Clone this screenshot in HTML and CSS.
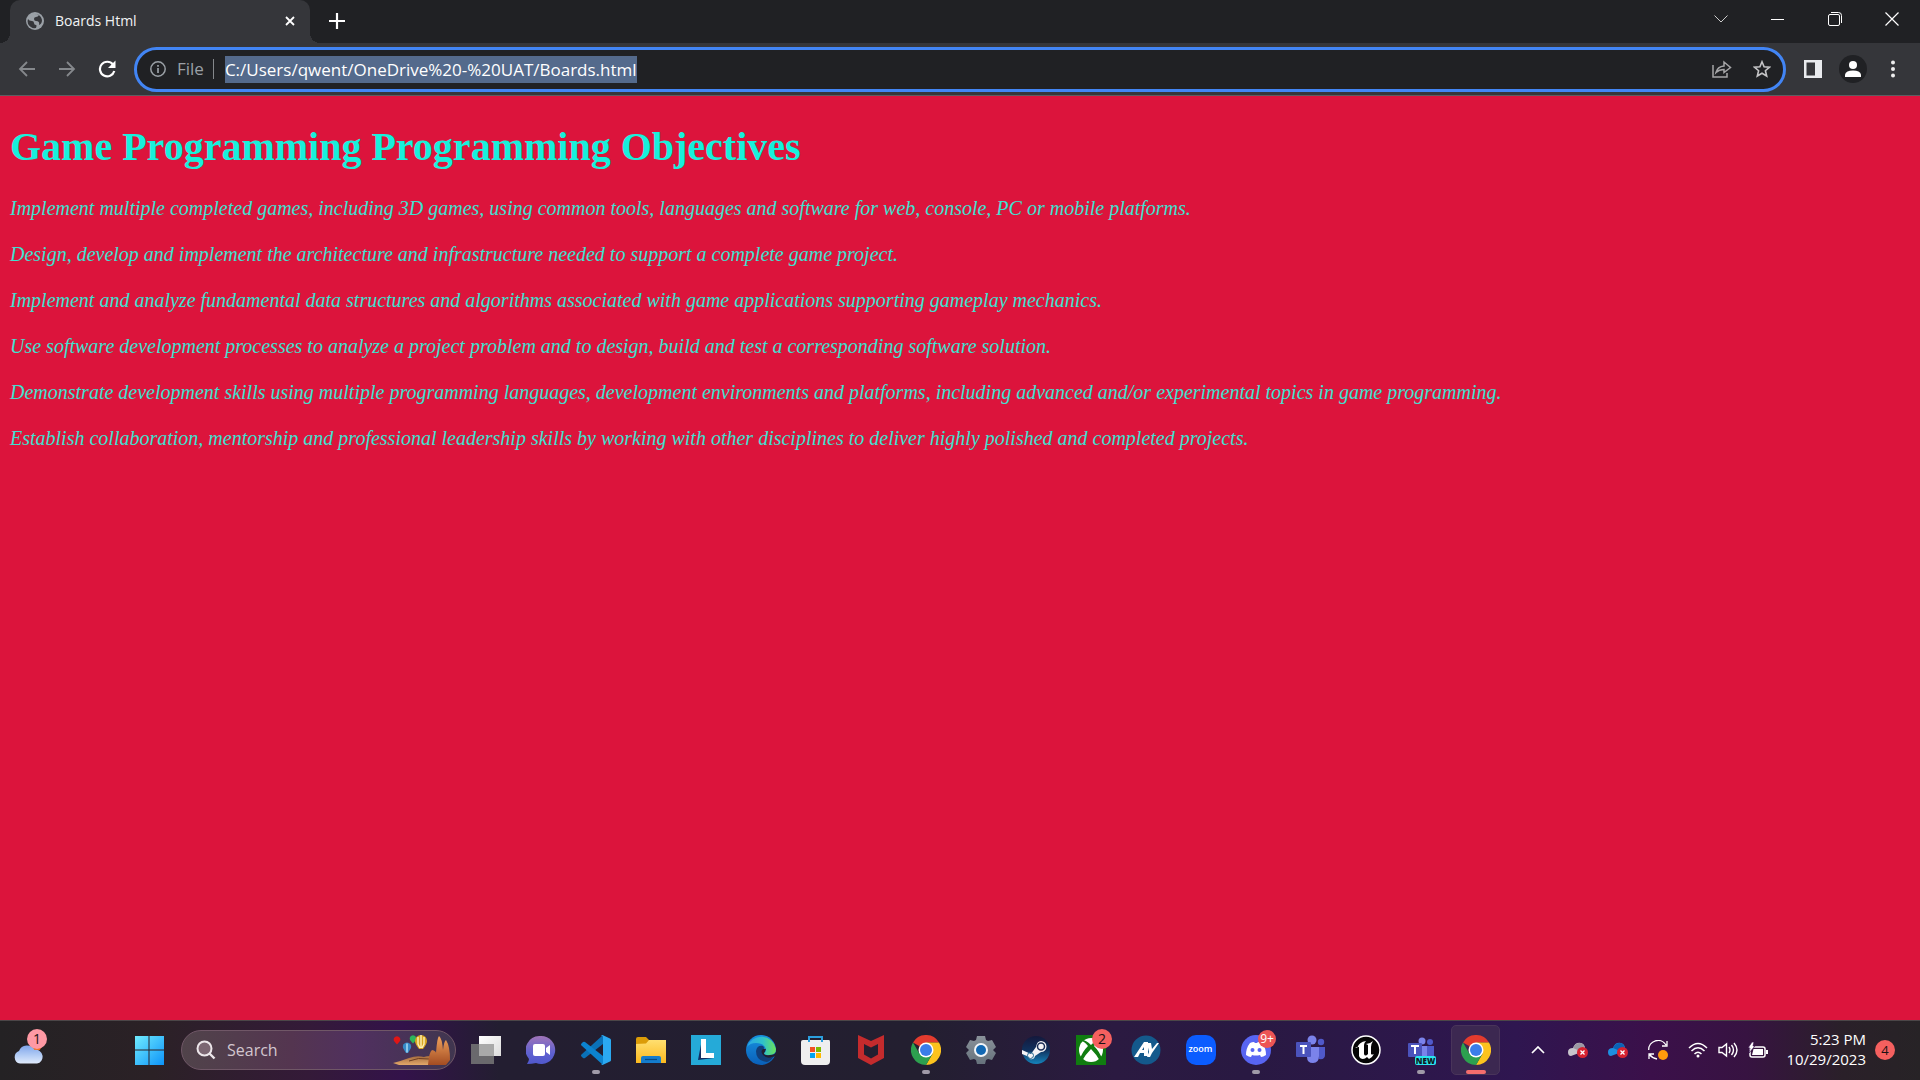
FILE: index.html
```html
<!DOCTYPE html>
<html lang="en">
<head>
<meta charset="utf-8">
<title>Boards Html</title>
<link rel="stylesheet" href="styles.css">
</head>
<body>
<svg class="defs" aria-hidden="true">
  <defs>
    <symbol id="chrome" viewBox="0 0 30 30">
      <path d="M15 15L2 7.500A15 15 0 0 1 28 7.500H15z" fill="#e33b2e"/>
      <path d="M15 7.500H28A15 15 0 0 1 15 30L21.500 18.750z" fill="#fcc31e"/>
      <path d="M8.500 18.750L2 7.500A15 15 0 0 0 15 30L21.500 18.750z" fill="#2da04f"/>
      <circle cx="15" cy="15" r="7.500" fill="#fff"/>
      <circle cx="15" cy="15" r="6" fill="#3b7de9"/>
    </symbol>
    <symbol id="alert" viewBox="0 0 11 11">
      <circle cx="5.500" cy="5.500" r="5.500" fill="#d62231"/>
      <path d="M3.500 3.500l4 4M7.500 3.500l-4 4" stroke="#fff" stroke-width="1.300"/>
    </symbol>
    <linearGradient id="winG" gradientUnits="userSpaceOnUse" x1="0" y1="0" x2="30" y2="30"><stop offset="0" stop-color="#74efff"/><stop offset="1" stop-color="#0d93f8"/></linearGradient>
    <linearGradient id="cloudG" x2="0" y2="1"><stop offset="0" stop-color="#7fa5ea"/><stop offset=".6" stop-color="#b8d0f6"/><stop offset="1" stop-color="#e0eafb"/></linearGradient>
    <linearGradient id="folderG" x2="0" y2="1"><stop offset="0" stop-color="#ffdf70"/><stop offset="1" stop-color="#fcb91e"/></linearGradient>
    <linearGradient id="edgeG" x2="1" y2="0"><stop offset="0" stop-color="#2aa5e8"/><stop offset=".55" stop-color="#30c2c8"/><stop offset="1" stop-color="#6be35a"/></linearGradient>
    <linearGradient id="edgeB" x2="0" y2="1"><stop offset="0" stop-color="#1791e0"/><stop offset="1" stop-color="#0a5fb8"/></linearGradient>
    <linearGradient id="chatG" x2="0" y2="1"><stop offset="0" stop-color="#a074b8"/><stop offset=".6" stop-color="#5f61d0"/><stop offset="1" stop-color="#5058cc"/></linearGradient>
    <linearGradient id="steamG" x2="0" y2="1"><stop offset="0" stop-color="#14183c"/><stop offset=".5" stop-color="#10305c"/><stop offset="1" stop-color="#1585bd"/></linearGradient>
    <linearGradient id="gearG" x2="0" y2="1"><stop offset="0" stop-color="#8a929a"/><stop offset="1" stop-color="#66727c"/></linearGradient>
    <linearGradient id="rockG" x2="0" y2="1"><stop offset="0" stop-color="#f0a25c"/><stop offset="1" stop-color="#a34c22"/></linearGradient>
    <linearGradient id="sandG" x2="0" y2="1"><stop offset="0" stop-color="#a36a3d"/><stop offset="1" stop-color="#e3a86a"/></linearGradient>
    <linearGradient id="paneG" x2="1" y2="1"><stop offset="0" stop-color="#fff"/><stop offset="1" stop-color="#dcdcdc"/></linearGradient>
  </defs>
</svg>

<header class="browser">
  <div class="tabstrip">
    <div class="tab">
      <svg class="favicon" width="18" height="18" viewBox="0 0 18 18"><circle cx="9" cy="9" r="9" fill="#9aa0a6"/><path d="M2 7q1 2 4 2 2 0 2 2t2 2q1 0 0 3-5 1-8-4-1-3 0-5zM9 2q3 0 4 1-1 2-3 2-2 0-2 2t2 2q4 0 3 4 3-1 3-5-1-5-6-6z" fill="#35363a"/></svg>
      <span class="tab-title">Boards Html</span>
      <button class="tab-close" aria-label="Close tab"><svg width="10" height="10" viewBox="0 0 10 10"><path d="M1 1l8 8M9 1L1 9" stroke="#fff" stroke-width="1.800"/></svg></button>
    </div>
    <button class="new-tab" aria-label="New tab"><svg width="16" height="16" viewBox="0 0 16 16"><path d="M8 0v16M0 8h16" stroke="#fff" stroke-width="2.200"/></svg></button>
    <div class="window-controls">
      <button aria-label="Search tabs"><svg width="14" height="8" viewBox="0 0 14 8"><path d="M.5.500L7 7l6.500-6.500" fill="none" stroke="#ccc"/></svg></button>
      <button aria-label="Minimize"><svg width="14" height="14" viewBox="0 0 14 14"><path d="M0 7.500h13" stroke="#fff"/></svg></button>
      <button aria-label="Restore"><svg width="14" height="14" viewBox="0 0 14 14" fill="none" stroke="#fff"><rect x=".5" y="2.500" width="11" height="11" rx="1.500"/><path d="M3 .5h7.500a3 3 0 0 1 3 3V11"/></svg></button>
      <button aria-label="Close"><svg width="14" height="14" viewBox="0 0 14 14"><path d="M.5.500l13 13M13.500.500l-13 13" stroke="#fff" stroke-width="1.200"/></svg></button>
    </div>
  </div>
  <div class="toolbar">
    <nav class="nav-buttons">
      <button aria-label="Back"><svg width="18" height="16" viewBox="0 0 18 16" fill="none" stroke="#85888c" stroke-width="1.800"><path d="M17 8H2M9 1L2 8l7 7"/></svg></button>
      <button aria-label="Forward"><svg width="18" height="16" viewBox="0 0 18 16" fill="none" stroke="#85888c" stroke-width="1.800"><path d="M1 8h15M9 1l7 7-7 7"/></svg></button>
      <button aria-label="Reload"><svg width="18" height="18" viewBox="0 0 18 18"><path d="M15 4.500A7.300 7.300 0 1 0 16.300 11" fill="none" stroke="#fff" stroke-width="2.200"/><path d="M17.500.500v7.500H10z" fill="#fff"/></svg></button>
    </nav>
    <form class="address">
      <svg class="info" width="16" height="16" viewBox="0 0 16 16"><circle cx="8" cy="8" r="7.200" fill="none" stroke="#9aa0a6" stroke-width="1.500"/><path d="M8 7v5M8 4v1.700" stroke="#9aa0a6" stroke-width="1.700"/></svg>
      <label class="scheme" for="url">File</label>
      <span class="field"><input id="url" class="url" type="text" value="C:/Users/qwent/OneDrive%20-%20UAT/Boards.html"></span>
      <button type="button" aria-label="Share"><svg width="20" height="18" viewBox="0 0 20 18" fill="none" stroke="#a5a5a7" stroke-width="1.500"><path d="M1 5v12h14v-4"/><path d="M4 12.500Q5.500 6.500 12 6V2l6.500 5.500L12 12.500V9.500Q7 9.500 4 12.500z"/></svg></button>
      <button type="button" aria-label="Bookmark"><svg width="18" height="18" viewBox="0 0 18 18" fill="none" stroke="#c4c4c6" stroke-width="1.600"><path d="M9 1.800l2.100 5 5.400.4-4.100 3.500 1.300 5.300L9 13.200 4.300 16l1.300-5.300-4.100-3.500 5.400-.4z"/></svg></button>
    </form>
    <div class="actions">
      <button aria-label="Side panel"><svg width="18" height="18" viewBox="0 0 18 18"><path d="M0 0h18v18H0zM2.500 2.500v13H11v-13z" fill="#e9ebee" fill-rule="evenodd"/></svg></button>
      <button aria-label="Profile"><svg width="28" height="28" viewBox="0 0 28 28"><circle cx="14" cy="14" r="14" fill="#202124"/><circle cx="14" cy="10" r="4" fill="#fff"/><path d="M6 22v-2.500Q7 15.500 14 15.500t8 4V22z" fill="#fff"/></svg></button>
      <button aria-label="Menu"><svg width="4" height="18" viewBox="0 0 4 18" fill="#eee"><circle cx="2" cy="2.500" r="2"/><circle cx="2" cy="9" r="2"/><circle cx="2" cy="15.500" r="2"/></svg></button>
    </div>
  </div>
</header>

<main class="page">
  <h1>Game Programming Programming Objectives</h1>
  <p>Implement multiple completed games, including 3D games, using common tools, languages and software for web, console, PC or mobile platforms.</p>
  <p>Design, develop and implement the architecture and infrastructure needed to support a complete game project.</p>
  <p>Implement and analyze fundamental data structures and algorithms associated with game applications supporting gameplay mechanics.</p>
  <p>Use software development processes to analyze a project problem and to design, build and test a corresponding software solution.</p>
  <p>Demonstrate development skills using multiple programming languages, development environments and platforms, including advanced and/or experimental topics in game programming.</p>
  <p>Establish collaboration, mentorship and professional leadership skills by working with other disciplines to deliver highly polished and completed projects.</p>
</main>

<footer class="taskbar">
  <button class="weather" aria-label="Weather"><svg width="30" height="20" viewBox="0 0 30 20"><circle cx="23" cy="1" r="6" fill="#f2701c"/><path d="M7 19.500a6.500 6.500 0 0 1-1-12.500A8.500 8.500 0 0 1 21.500 6 6.500 6.500 0 0 1 24 19.500z" fill="url(#cloudG)"/></svg><span class="badge pink">1</span></button>
  <div class="apps">
    <button class="app" aria-label="Start"><svg width="30" height="30" viewBox="0 0 30 30" fill="url(#winG)"><path d="M1 1h13.500v13.500H1zM15.500 1H30v13.500H15.500zM1 15.500h13.500V30H1zM15.500 15.500H30V30H15.500z"/></svg></button>
    <label class="search">
      <svg width="20" height="20" viewBox="0 0 20 20"><circle cx="8.500" cy="8.500" r="7" fill="#7b6672" stroke="#ece6ea" stroke-width="2"/><path d="M13.500 13.500l5 5" stroke="#ece6ea" stroke-width="2.400"/></svg>
      <input type="text" placeholder="Search" aria-label="Search">
      <svg class="balloons" width="58" height="32" viewBox="0 0 58 32">
        <path d="M0 29Q8 27 16 24t15-1q5-2 10 0v8H6z" fill="url(#sandG)"/><path d="M16 27q9-4 20-2" stroke="#6d3d20" fill="none"/>
        <path d="M35 31q1-13 4-15 4 1 4 3 1-15 3-17 3 2 4 14 1-9 3-10 4 6 4 20l-4 5z" fill="url(#rockG)"/>
        <path d="M1 7a3.300 3.300 0 1 1 6 0L4 10.500z" fill="#e01616"/>
        <path d="M17 6a3.300 3.300 0 1 1 6 0l-3 3.500z" fill="#2db55b"/>
        <path d="M10 14a4.200 4.200 0 1 1 8 0l-3 5h-2z" fill="#3589c8"/><path d="M14 9.500v9" stroke="#a8dcf5" stroke-width="1.500"/>
        <path d="M22 7a6 6 0 1 1 12 0q0 3-4 8h-4q-4-5-4-8z" fill="#d9a520"/><path d="M25 3v7l2 4M31 3v7l-2 4M28 1v13" fill="none" stroke="#fff0b5" stroke-width="1.400"/>
      </svg>
    </label>
    <button class="app" aria-label="Task view"><svg width="30" height="30" viewBox="0 0 30 30"><path d="M8 1h22v20H8z" fill="url(#paneG)"/><path d="M0 9h23v20H0z" fill="#777" fill-opacity=".85"/><path d="M8 9h15v12H8z" fill="#a9a9a9"/></svg></button>
    <button class="app" aria-label="Chat"><svg width="30" height="30" viewBox="0 0 30 30"><path d="M15 1a14 14 0 1 1-5 27q-4 1-9 1 2-3 2-5A14 14 0 0 1 15 1z" fill="url(#chatG)"/><rect x="7" y="9" width="12" height="12" rx="2" fill="#fff"/><path d="M20 13l4-3v10l-4-3z" fill="#fff"/></svg></button>
    <button class="app" aria-label="Visual Studio Code"><svg width="30" height="30" viewBox="0 0 30 30"><path d="M22 0v9L4 23q-1 .5-2 0L.5 21.500q-1-1 0-2z" fill="#0a71b8"/><path d="M22 30v-9L4 7q-1-.5-2 0L.5 8.500q-1 1 0 2z" fill="#0c83cf"/><path d="M21.500 0L29 3.500q1 .5 1 1.500v20q0 1-1 1.500L21.500 30q-1 0-1.500-1 2 1 2-1V2q0-2-2-1 .5-1 1.500-1z" fill="#2ba9f1"/></svg><i class="running"></i></button>
    <button class="app" aria-label="File Explorer"><svg width="30" height="30" viewBox="0 0 30 30"><path d="M0 4q0-2 2-2h8l3 3v5H0z" fill="#dc9c08"/><path d="M0 9l10-.5 3-3.500h17v23H0z" fill="url(#folderG)"/><path d="M5 28v-5q0-2 2-2h16q2 0 2 2v5z" fill="#147ccc"/><path d="M9 24.500h12" stroke="#064a83" stroke-width="1.200"/></svg></button>
    <button class="app" aria-label="L"><svg width="30" height="30" viewBox="0 0 30 30"><path d="M0 0h30v30H0z" fill="#25aad8"/><path d="M11 4L7 25l16-2-11-5z" fill="#122e63"/><path d="M10 4h5v14h8v5H10z" fill="#fff"/></svg></button>
    <button class="app" aria-label="Edge"><svg width="30" height="30" viewBox="0 0 30 30"><circle cx="15" cy="15" r="15" fill="url(#edgeB)"/><path d="M1 12A15 15 0 0 1 30 14q0 6-7 6-5 0-5-2 2-1 2-4-2-6-10-6-6 0-9 4z" fill="url(#edgeG)"/><path d="M17 11q-6-1-7 5 0 10 11 11 4-1 7-6-8 3-11-3-1-2 0-3 2-2 0-4z" fill="#123e78"/><path d="M20 14q-1 3-2 4 0 3 6 2 5 0 6-3v3q-1 2-4 2-5 2-9-2-3-4 0-6z" fill="#221f30"/></svg></button>
    <button class="app" aria-label="Microsoft Store"><svg width="30" height="30" viewBox="0 0 30 30"><path d="M0 7q0-2 2-2h26q1 0 1 2v19q0 4-4 4H4q-4 0-4-4z" fill="#efefef"/><path d="M8 7V2h13v5" fill="none" stroke="#2b9fdf" stroke-width="2"/><path d="M9 12h5v5H9z" fill="#f25022"/><path d="M15 12h5v5h-5z" fill="#7fba00"/><path d="M9 18h5v5H9z" fill="#00a4ef"/><path d="M15 18h5v5h-5z" fill="#ffb900"/></svg></button>
    <button class="app" aria-label="McAfee"><svg width="30" height="30" viewBox="0 0 30 30"><path d="M2 0l13 6L28 0v23l-13 7-13-7zM8 9v10.500l7 4 7-4V9l-7 3.500z" fill="#c42b2d" fill-rule="evenodd"/></svg></button>
    <button class="app" aria-label="Chrome"><svg width="30" height="30"><use href="#chrome"/></svg><i class="running"></i></button>
    <button class="app" aria-label="Settings"><svg width="30" height="30" viewBox="0 0 30 30"><path d="M11 1h8l1 4 2 1 4-1 4 7-3 3 3 3-4 7-4-1-2 1-1 4h-8l-1-4-2-1-4 1-4-7 3-3-3-3 4-7 4 1 2-1z" fill="url(#gearG)"/><circle cx="15" cy="15" r="7" fill="#f2f5f8"/><circle cx="15" cy="15" r="5" fill="#1268b3"/></svg></button>
    <button class="app" aria-label="Steam"><svg width="30" height="30" viewBox="0 0 30 30"><circle cx="15" cy="15" r="14" fill="url(#steamG)"/><path d="M1 15l9 4 5-7q1-6 5-6a5.500 5.500 0 0 1 0 11l-6 4q-1 4-5 3l-3-3-5-2z" fill="#f4f4f6"/><circle cx="20" cy="11.500" r="3.500" fill="#f4f4f6" stroke="#182c55" stroke-width="1.500"/><circle cx="9.500" cy="20.500" r="3" fill="none" stroke="#21678f" stroke-width="1"/></svg></button>
    <button class="app" aria-label="Xbox"><svg width="30" height="30" viewBox="0 0 30 30"><path d="M0 0h30v30H0z" fill="#107c10"/><circle cx="15" cy="15" r="12" fill="#fff"/><path d="M6 5q4 0 9 5 5-5 9-5l1 1q-3 0-7 5 6 6 8 13l-2 2q-3-6-9-12-6 6-9 12l-2-2q2-7 8-13-4-5-7-5z" fill="#107c10"/></svg><span class="badge">2</span></button>
    <button class="app" aria-label="AV"><svg width="30" height="30" viewBox="0 0 30 30"><circle cx="15" cy="15" r="14.500" fill="#14598c"/><path d="M3 22L13 7h4v14h-4v-3H9l-2 4zM11 15h2v-3zM16 8h4l1 6 5-6h2l-7 10-2 4h-3l2-5z" fill="#fff"/></svg></button>
    <button class="app" aria-label="Zoom"><span class="zoom">zoom</span></button>
    <button class="app" aria-label="Discord"><svg width="30" height="30" viewBox="0 0 30 30"><circle cx="15" cy="15" r="15" fill="#5865f2"/><path d="M9 8q2-1 4-1l1 1h2l1-1q2 0 4 1 4 5 4 12-3 2-5 2l-1-2q-4 1-8 0l-1 2q-2 0-5-2 0-7 4-12z" fill="#fff"/><circle cx="11.500" cy="15" r="2" fill="#5865f2"/><circle cx="18.500" cy="15" r="2" fill="#5865f2"/></svg><span class="badge small">9+</span><i class="running"></i></button>
    <button class="app" aria-label="Teams"><svg width="30" height="30" viewBox="0 0 30 30"><circle cx="25" cy="7" r="3.200" fill="#5059c9"/><circle cx="16" cy="5" r="4.500" fill="#7b83eb"/><path d="M21 12h8v8q0 5-6 4z" fill="#5059c9"/><path d="M11 12h12v9q0 7-6 7t-6-6z" fill="#7b83eb"/><rect y="7" width="15" height="15" rx="1" fill="#4b53bc"/><path d="M4 11h7M7.500 11v8" stroke="#fff" stroke-width="2"/></svg></button>
    <button class="app" aria-label="Unreal Engine"><svg width="30" height="30" viewBox="0 0 30 30"><circle cx="15" cy="15" r="14" fill="#050505" stroke="#fff" stroke-width="1.500"/><path d="M6 13q2-6 9-7-2 2-2 4v9q1 3 4 0V10l-2-1q4 0 7-3-2 3-2 6v7q1 1 3 0-2 4-5 5l-2-2q-2 2-4 2-3 0-4-3v-9q-2 0-4 1z" fill="#fff"/></svg></button>
    <button class="app" aria-label="Teams new"><svg width="30" height="30" viewBox="0 0 30 30"><circle cx="24" cy="7" r="3" fill="#5059c9"/><circle cx="16" cy="6" r="3.500" fill="#7b83eb"/><path d="M21 11h7v10h-7z" fill="#5059c9"/><path d="M12 11h9v10h-9z" fill="#7b83eb"/><rect x="2" y="8" width="14" height="14" rx="1" fill="#4b53bc"/><path d="M5 11h8M9 11v8" stroke="#fff" stroke-width="2"/></svg><span class="new">NEW</span><i class="running"></i></button>
    <button class="app active" aria-label="Chrome window"><svg width="30" height="30"><use href="#chrome"/></svg><i class="running"></i></button>
  </div>
  <div class="tray">
    <button aria-label="Hidden icons"><svg width="14" height="8" viewBox="0 0 14 8"><path d="M1 7l6-6 6 6" fill="none" stroke="#fff" stroke-width="1.700"/></svg></button>
    <button aria-label="OneDrive"><svg width="20" height="18" viewBox="0 0 20 18"><path d="M5 7q2-6 8-5 4 1 4 6l-6 4-8 3q-3 0-3-4t5-4z" fill="#c8c4cc"/><path d="M5 7q2-5 7-5 4 0 5 6l-5 2z" fill="#9c98a4"/><use href="#alert" x="9" y="6" width="11" height="11"/></svg></button>
    <button aria-label="OneDrive personal"><svg width="20" height="18" viewBox="0 0 20 18"><path d="M5 7q2-6 8-5 4 1 4 6l-6 4-8 3q-3 0-3-4t5-4z" fill="#1d8fe0"/><path d="M5 7q2-5 7-5 4 0 5 6l-5 2z" fill="#0c62b5"/><use href="#alert" x="9" y="6" width="11" height="11"/></svg></button>
    <button aria-label="Sync"><svg width="20" height="20" viewBox="0 0 20 20"><path d="M.7 10A9.300 9.300 0 0 1 18 5M19 1v5h-5M1 19v-5h5M1.500 14.500Q4 18 9 19" fill="none" stroke="#fff" stroke-width="1.300"/><circle cx="15" cy="15" r="5" fill="#ff9a0c"/></svg></button>
    <div class="status">
      <svg width="20" height="16" viewBox="0 0 20 16" fill="none" stroke="#fff" stroke-width="1.500"><path d="M1 6q9-9 18 0M3.500 9q6.500-6.500 13 0M6.500 12q3.500-3.500 7 0"/><circle cx="10" cy="14" r="1.500" fill="#fff" stroke="none"/></svg>
      <svg width="20" height="16" viewBox="0 0 20 16" fill="none" stroke="#fff" stroke-width="1.400"><path d="M1 5.500h3L8.500 2v12L4 10.500H1zM11 5q2 3 0 6M13.500 3q4 5 0 10M16 1q6 7 0 14"/></svg>
      <svg width="20" height="17" viewBox="0 0 20 17"><rect x="2" y="5" width="15" height="10" rx="2" fill="none" stroke="#fff" stroke-width="1.500"/><path d="M5.500 7h9.500v6H4zM18 8h2v4h-2z" fill="#fff"/><path d="M4 0L0 6h2l-1 5 6-7H5l1-4z" fill="#fff" stroke="#37104a" stroke-width=".7"/></svg>
    </div>
    <time class="clock" datetime="2023-10-29T17:23"><span>5:23 PM</span><span>10/29/2023</span></time>
    <span class="notifications">4</span>
  </div>
</footer>
</body>
</html>
```

FILE: styles.css
```css
* { box-sizing: border-box; }

body {
  margin: 0;
  min-height: 100vh;
  display: flex;
  flex-direction: column;
  background: #dc143c;
  font-family: "Open Sans", "Noto Sans", sans-serif;
}

.defs { position: absolute; width: 0; height: 0; }

svg { display: block; flex: none; }

button {
  display: flex;
  align-items: center;
  justify-content: center;
  margin: 0;
  padding: 0;
  border: 0;
  background: none;
  font: inherit;
  color: inherit;
}

input {
  padding: 0;
  border: 0;
  outline: 0;
  background: none;
  font: inherit;
  color: inherit;
}

/* Browser frame */
.browser { border-bottom: 1px solid #5c5d61; background: #35363a; }

.tabstrip {
  display: flex;
  align-items: stretch;
  height: 43px;
  padding-left: 10px;
  background: #202124;
}

.tab {
  position: relative;
  display: flex;
  align-items: center;
  width: 300px;
  padding: 0 10px 1px 16px;
  border-radius: 10px 10px 0 0;
  background: #35363a;
  color: #f1f3f4;
}

.tab::before,
.tab::after {
  content: "";
  position: absolute;
  bottom: 0;
  width: 10px;
  height: 10px;
}

.tab::before { right: 100%; background: radial-gradient(circle at 0 0, #202124 10px, #35363a 10px); }
.tab::after { left: 100%; background: radial-gradient(circle at 100% 0, #202124 10px, #35363a 10px); }

.tab-title { flex: 1; margin-left: 11px; font-size: 14px; line-height: 20px; }
.tab-close { width: 20px; height: 20px; }
.new-tab { width: 54px; padding-bottom: 1px; }

.window-controls { display: flex; height: 37px; margin-left: auto; }
.window-controls button { width: 57px; }

.toolbar { display: flex; align-items: center; height: 52px; padding: 0 7px; }
.nav-buttons, .actions { display: flex; }
.nav-buttons button, .actions button, .address button { width: 40px; height: 40px; }

.address {
  flex: 1;
  display: flex;
  align-items: center;
  height: 45px;
  margin: 0 7px;
  padding: 0 1px 0 13px;
  border: 3px solid #4285f4;
  border-radius: 23px;
  background: #202124;
  font-size: 17px;
}

.scheme {
  margin-left: 11px;
  padding-right: 9px;
  border-right: 1px solid #85888c;
  line-height: 20px;
  color: #9aa0a6;
}

.field { flex: 1; display: flex; margin-left: 11px; }

.url {
  field-sizing: content;
  height: 27px;
  background: #546a8c;
  color: #fff;
}

/* Document */
.page {
  flex: 1;
  padding: 26px 10px;
  font-family: "Liberation Serif", "Times New Roman", serif;
  color: #18f0dc;
}

.page h1 { margin: 0 0 23px; font-size: 40px; line-height: 50px; }
.page p { margin: 0 0 20px; font-size: 20px; font-style: italic; line-height: 26px; color: #40e0d0; }

/* Taskbar */
.taskbar {
  display: flex;
  align-items: center;
  height: 60px;
  padding-bottom: 1px;
  border-top: 1px solid #4c4648;
  background: linear-gradient(90deg, #242224 0%, #2b2126 8%, #341a38 16%, #33124a 21%, #231e31 26%, #231f30 48%, #2b1a41 58%, #291942 65%, #2f1650 79%, #3b104a 86%, #371341 91%, #2a2029 96%, #272326 100%);
  color: #fff;
}

.weather { position: relative; width: 56px; height: 56px; padding-top: 8px; }

.badge {
  position: absolute;
  top: 4px;
  right: 6px;
  width: 20px;
  height: 20px;
  border-radius: 10px;
  background: #f5605f;
  color: #1c1214;
  font-size: 14px;
  line-height: 20px;
  text-align: center;
}

.badge.pink { top: 7px; right: 9px; background: #ff99a4; }
.badge.small { top: 5px; right: 7px; width: 18px; height: 18px; line-height: 18px; background: #ed5555; color: #fff; font-size: 12px; }

.apps { display: flex; align-items: center; margin-left: 65px; }
.app { position: relative; width: 55px; height: 50px; }
.app.active::before {
  content: "";
  position: absolute;
  inset: 0 3px;
  border: 1px solid #49345a;
  border-radius: 5px;
  background: #3c2851;
}
.app.active svg { position: relative; }

.running {
  position: absolute;
  bottom: 1px;
  left: calc(50% - 4px);
  width: 8px;
  height: 4px;
  border-radius: 2px;
  background: #a09aa8;
}

.active .running { left: calc(50% - 10px); width: 20px; background: #f56d6d; }

.search {
  display: flex;
  align-items: center;
  width: 275px;
  height: 40px;
  margin: 0 2px 0 5px;
  padding: 0 4px 0 14px;
  border: 1px solid #705767;
  border-radius: 20px;
  background: linear-gradient(90deg, #50434a, #543550 40%, #50305f 65%, #40364f);
  font-size: 16px;
}

.search input { flex: 1; min-width: 0; margin-left: 11px; }
.search input::placeholder { color: #d2c6cf; opacity: 1; }

.zoom {
  width: 30px;
  height: 30px;
  border-radius: 10px;
  background: #0b5cff;
  font-size: 9px;
  font-weight: 600;
  line-height: 28px;
}

.new {
  position: absolute;
  right: 12px;
  bottom: 10px;
  width: 21px;
  height: 9px;
  border-radius: 2px;
  background: #29e5ee;
  color: #101820;
  font-size: 8px;
  font-weight: 800;
  line-height: 9px;
}

.tray { display: flex; align-items: center; margin-left: auto; padding-right: 25px; }
.tray button { width: 40px; height: 40px; }
.status { display: flex; gap: 10px; margin-left: 10px; }

.clock {
  display: flex;
  flex-direction: column;
  width: 98px;
  padding-bottom: 2px;
  font-size: 15px;
  line-height: 20px;
  text-align: right;
}

.notifications {
  width: 20px;
  height: 20px;
  margin-left: 9px;
  border-radius: 10px;
  background: #f5605f;
  color: #1c1214;
  font-size: 13px;
  line-height: 20px;
  text-align: center;
}
```
